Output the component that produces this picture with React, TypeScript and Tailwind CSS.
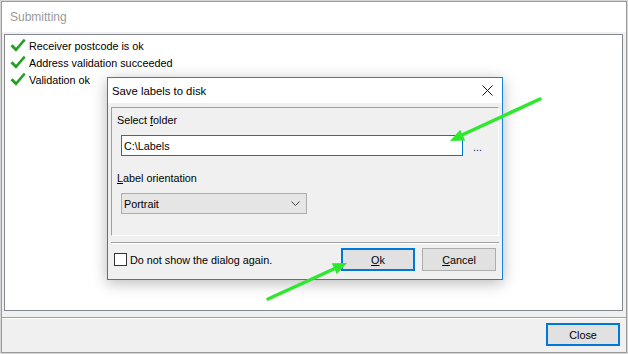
import React from "react"

function Check() {
  return (
    <svg width="16" height="15" viewBox="0 0 16 15" className="shrink-0">
      <path d="M0.5 8.2 L2.6 6.2 L6 9.8 L13.8 0.8 L15.6 2.6 L6 13.8 Z" fill="#23a023" />
    </svg>
  )
}

function WinButton({ children, primary }: { children: React.ReactNode; primary?: boolean }) {
  return (
    <div
      className={`w-[74px] h-[23px] flex items-center justify-center bg-[#e1e1e1] text-black ${
        primary ? "border-2 border-[#0078d7]" : "border border-[#adadad]"
      }`}
    >
      {children}
    </div>
  )
}

export default function App() {
  const results = ["Receiver postcode is ok", "Address validation succeeded", "Validation ok"]

  return (
    <div className="relative w-[628px] h-[354px] overflow-hidden bg-[#d6d6d6] p-[1px] font-['Liberation_Sans',Arial,sans-serif] text-[10.8px] leading-[14px] text-black">
      {/* Submitting window */}
      <div className="w-[626px] h-[352px] border border-[#9a9a9a] bg-[#f0f0f0] flex flex-col">
        <div className="h-[30px] shrink-0 bg-white flex items-center pl-[8px] text-[12px] text-[#9a9a9a]">
          Submitting
        </div>

        <div className="mt-[2px] ml-[2px] mr-[3px] h-[277px] border border-[#828790] bg-white pt-[2px] pl-[5px]">
          {results.map((r) => (
            <div key={r} className="h-[17px] flex items-center gap-[3px]">
              <Check />
              <span>{r}</span>
            </div>
          ))}
        </div>

        <div className="mt-[6px] border-t border-[#a0a0a0] border-b border-b-white" />

        <div className="mt-[4px] flex justify-end pr-[6px]">
          <WinButton primary>Close</WinButton>
        </div>
      </div>

      {/* Save labels dialog */}
      <div className="absolute left-[107px] top-[77px] w-[396px] h-[203px] border border-[#1883d7] bg-[#f0f0f0] shadow-[0_3px_14px_rgba(0,0,0,0.28)] flex flex-col">
        <div className="h-[25px] shrink-0 bg-white flex items-center justify-between pl-[4px] pr-[9px] text-[11.3px]">
          <span>Save labels to disk</span>
          <svg width="11" height="11" viewBox="0 0 11 11">
            <path d="M0.5 0.5 L10.5 10.5 M10.5 0.5 L0.5 10.5" stroke="#111" strokeWidth="1" />
          </svg>
        </div>

        <div className="mt-[4px] mx-[3px] h-[129px] border-t border-l border-[#a0a0a0] border-r border-b border-r-white border-b-white pt-[5px] pl-[5px]">
          <div>
            Select <span className="underline">f</span>older
          </div>
          <div className="mt-[8px] ml-[4px] flex items-center">
            <div className="w-[342px] h-[21px] border border-[#0078d7] bg-white flex items-center pl-[2px]">
              C:\Labels
            </div>
            <span className="ml-[10px] mt-[2px] text-[#1a1a50]">...</span>
          </div>
          <div className="mt-[15px]">
            <span className="underline">L</span>abel orientation
          </div>
          <div className="mt-[8px] ml-[4px] w-[186px] h-[21px] border border-[#adadad] bg-[#e5e5e5] flex items-center justify-between pl-[2px] pr-[6px]">
            <span>Portrait</span>
            <svg width="9" height="5" viewBox="0 0 9 5">
              <path d="M0.5 0.5 L4.5 4.5 L8.5 0.5" stroke="#444" strokeWidth="1" fill="none" />
            </svg>
          </div>
        </div>

        <div className="mt-[6px] mx-[3px] border-t border-[#a0a0a0] border-b border-b-white" />

        <div className="mt-[4px] flex items-center pl-[6px] pr-[6px]">
          <div className="w-[13px] h-[13px] border border-[#333] bg-white" />
          <span className="ml-[3px]">Do not show the dialog again.</span>
          <div className="ml-auto flex gap-[7px]">
            <WinButton primary>
              <span className="underline">O</span>k
            </WinButton>
            <WinButton>
              <span className="underline">C</span>ancel
            </WinButton>
          </div>
        </div>
      </div>

      {/* green annotation arrows */}
      <svg className="absolute left-0 top-0 pointer-events-none" width="628" height="354" viewBox="0 0 628 354">
        <line x1="540" y1="99" x2="462" y2="135" stroke="#2ee82e" strokeWidth="3.5" strokeLinecap="round" />
        <polygon points="450,141 465.2,140.5 460.2,129.7" fill="#2ee82e" />
        <line x1="268" y1="299" x2="336" y2="268" stroke="#2ee82e" strokeWidth="3.5" strokeLinecap="round" />
        <polygon points="347,263 336.8,274.3 331.8,263.3" fill="#2ee82e" />
      </svg>
    </div>
  )
}
